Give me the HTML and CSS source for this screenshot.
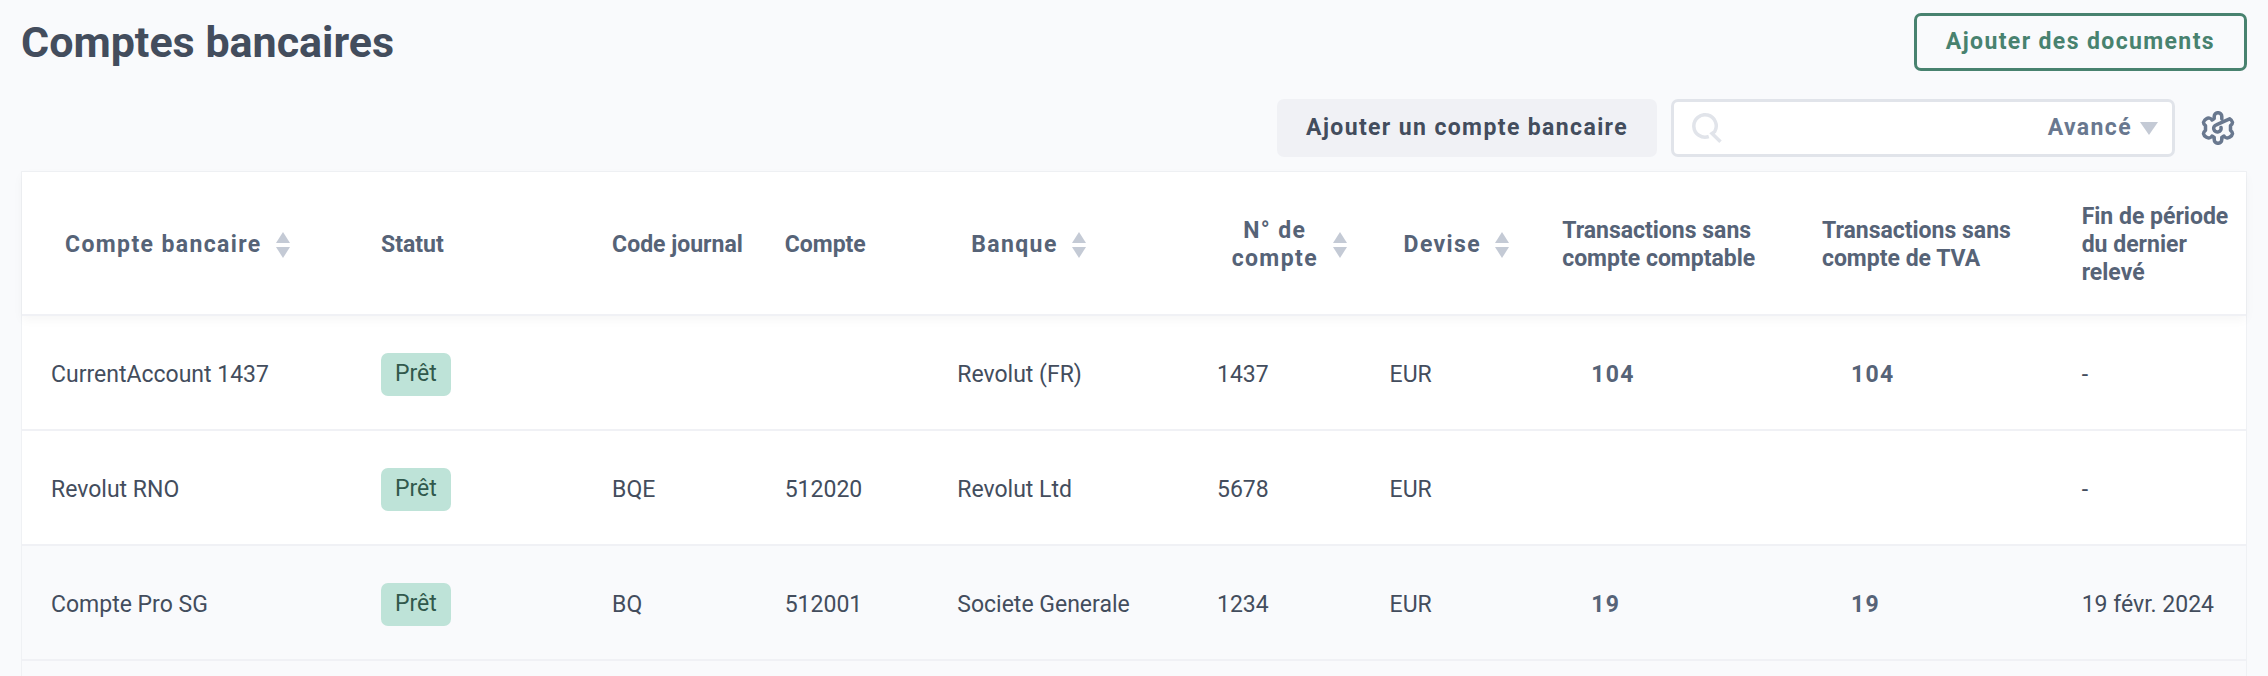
FILE: index.html
```html
<!doctype html>
<html lang="fr">
<head>
    <meta charset="UTF-8">
    <meta name="viewport" content="width=device-width, initial-scale=1.0">
    <title>Comptes bancaires</title>
    <link rel="stylesheet" href="styles.css">
</head>
<body>
<main class="page">
    <header class="page-header">
        <h1>Comptes bancaires</h1>
        <button type="button" class="btn btn-outline">Ajouter des documents</button>
    </header>

    <div class="toolbar">
        <button type="button" class="btn btn-grey">Ajouter un compte bancaire</button>
        <div class="search">
            <svg class="search-icon" viewBox="0 0 30 31" aria-hidden="true">
                <path d="M16.800 23.500A11.200 11.200 0 1 1 22.700 18.600L20 20.500L28.500 28.800"></path>
            </svg>
            <input type="text" class="search-input" aria-label="Rechercher">
            <button type="button" class="advanced">Avancé <span class="caret"></span></button>
        </div>
        <button type="button" class="settings" aria-label="Paramètres">
            <svg viewBox="0 0 34 34" aria-hidden="true">
                <path d="M20.800 8V5.500a3.800 3.800 0 0 0-7.600 0V7.500L11 9a3.800 3.800 0 0 0-5.600-1.200C1.800 10 1.600 12.500 4.500 14.700V19.300C1.600 21.500 1.800 24 5.400 26.200A3.800 3.800 0 0 0 11 25L13.200 26.500V28.500a3.800 3.800 0 0 0 7.600 0V26.500L23 25a3.800 3.800 0 0 0 5.600 1.200C32.200 24 32.400 21.500 29.500 19.300V14.700C32.400 12.500 32.200 10 28.600 7.800L15.300 13.800A3.700 3.700 0 1 0 20 16.500"></path>
            </svg>
        </button>
    </div>

    <div class="table-card">
        <table>
            <colgroup>
                <col class="col-name">
                <col class="col-status">
                <col class="col-small">
                <col class="col-small">
                <col class="col-large">
                <col class="col-small">
                <col class="col-small">
                <col class="col-large">
                <col class="col-large">
                <col>
            </colgroup>
            <thead>
            <tr>
                <th><button type="button" class="sort"><span>Compte bancaire</span><i></i></button></th>
                <th>Statut</th>
                <th>Code journal</th>
                <th>Compte</th>
                <th><button type="button" class="sort"><span>Banque</span><i></i></button></th>
                <th><button type="button" class="sort"><span>N° de compte</span><i></i></button></th>
                <th><button type="button" class="sort"><span>Devise</span><i></i></button></th>
                <th>Transactions sans compte comptable</th>
                <th>Transactions sans compte de TVA</th>
                <th>Fin de période du dernier relevé</th>
            </tr>
            </thead>
            <tbody>
            <tr>
                <td>CurrentAccount 1437</td>
                <td><span class="badge">Prêt</span></td>
                <td></td>
                <td></td>
                <td>Revolut (FR)</td>
                <td>1437</td>
                <td>EUR</td>
                <td><a href="#" class="count">104</a></td>
                <td><a href="#" class="count">104</a></td>
                <td>-</td>
            </tr>
            <tr>
                <td>Revolut RNO</td>
                <td><span class="badge">Prêt</span></td>
                <td>BQE</td>
                <td>512020</td>
                <td>Revolut Ltd</td>
                <td>5678</td>
                <td>EUR</td>
                <td></td>
                <td></td>
                <td>-</td>
            </tr>
            <tr class="active">
                <td>Compte Pro SG</td>
                <td><span class="badge">Prêt</span></td>
                <td>BQ</td>
                <td>512001</td>
                <td>Societe Generale</td>
                <td>1234</td>
                <td>EUR</td>
                <td><a href="#" class="count">19</a></td>
                <td><a href="#" class="count">19</a></td>
                <td>19 févr. 2024</td>
            </tr>
            </tbody>
        </table>
    </div>
</main>
</body>
</html>
```

FILE: styles.css
```css
* {
    box-sizing: border-box;
    margin: 0;
    padding: 0;
}

body {
    font-family: Roboto, "Liberation Sans", sans-serif;
    font-size: 23px;
    line-height: 28px;
    color: #434d5d;
    background: #f9fafc;
}

button,
input {
    font: inherit;
    color: inherit;
    background: none;
    border: none;
}

button {
    cursor: pointer;
}

.page {
    display: flex;
    flex-direction: column;
    min-height: 100vh;
    padding: 13px 21px 0;
}

.page-header {
    display: flex;
    justify-content: space-between;
    align-items: center;
    margin-bottom: 28px;
}

h1 {
    font-size: 43px;
    line-height: 56px;
    font-weight: 700;
}

.btn,
.advanced,
.sort,
.count {
    font-weight: 700;
    letter-spacing: .06em;
}

.btn {
    height: 58px;
    padding: 0 29px;
    border-radius: 7px;
}

.btn-outline {
    color: #48826f;
    border: 3px solid #48826f;
}

.btn-grey {
    background: #f0f1f5;
}

.toolbar {
    display: flex;
    justify-content: flex-end;
    align-items: center;
    gap: 14px;
    margin-bottom: 14px;
}

.search {
    display: flex;
    align-items: center;
    width: 504px;
    height: 58px;
    padding: 0 14px 0 18px;
    background: #fff;
    border: 3px solid #e1e4ea;
    border-radius: 7px;
}

.search-icon {
    flex: none;
    width: 30px;
    height: 31px;
    fill: none;
    stroke: #e1e4ea;
    stroke-width: 3.5;
}

.search-input {
    flex: 1;
    min-width: 0;
    height: 100%;
    padding: 0 14px;
    outline: none;
}

.advanced {
    display: flex;
    align-items: center;
    gap: 8px;
    color: #69788f;
}

.caret {
    border: 9px solid transparent;
    border-top: 13px solid #c4cad5;
    border-bottom: none;
}

.settings {
    display: flex;
    padding: 0 12px;
}

.settings svg {
    width: 34px;
    height: 34px;
    fill: none;
    stroke: #69788f;
    stroke-width: 3.5;
    stroke-linecap: round;
    stroke-linejoin: round;
}

.table-card {
    flex: 1;
    border: 1px solid #eff1f4;
    border-bottom: none;
}

table {
    width: 100%;
    table-layout: fixed;
    border-spacing: 0;
    background: #fff;
}

.col-name {
    width: 14.84%;
}

.col-status {
    width: 10.39%;
}

.col-small {
    width: 7.76%;
}

.col-large {
    width: 11.68%;
}

th,
td {
    height: 115px;
    padding: 4px 0 0 29px;
    text-align: left;
    vertical-align: middle;
    border-bottom: 2px solid #f0f1f5;
}

th {
    height: 144px;
    font-weight: 700;
    color: #566377;
}

thead tr {
    position: relative;
    box-shadow: 0 4px 10px rgba(0, 0, 0, .04);
}

.sort {
    display: flex;
    align-items: center;
    gap: 14px;
    padding: 0 14px;
}

/* pair of sort arrows */
.sort i {
    flex: none;
    display: grid;
    gap: 4px;
}

.sort i::before,
.sort i::after {
    content: '';
    border: 7px solid transparent;
}

.sort i::before {
    border-top: none;
    border-bottom: 11px solid #c4cad5;
}

.sort i::after {
    border-bottom: none;
    border-top: 11px solid #c4cad5;
}

.active td {
    background: #f9fafc;
}

.badge {
    display: inline-block;
    padding: 7px 14px 8px;
    vertical-align: middle;
    color: #31594c;
    background: #bee3d8;
    border-radius: 7px;
}

.count {
    padding-left: 29px;
    text-decoration: none;
    color: #566377;
}
```
